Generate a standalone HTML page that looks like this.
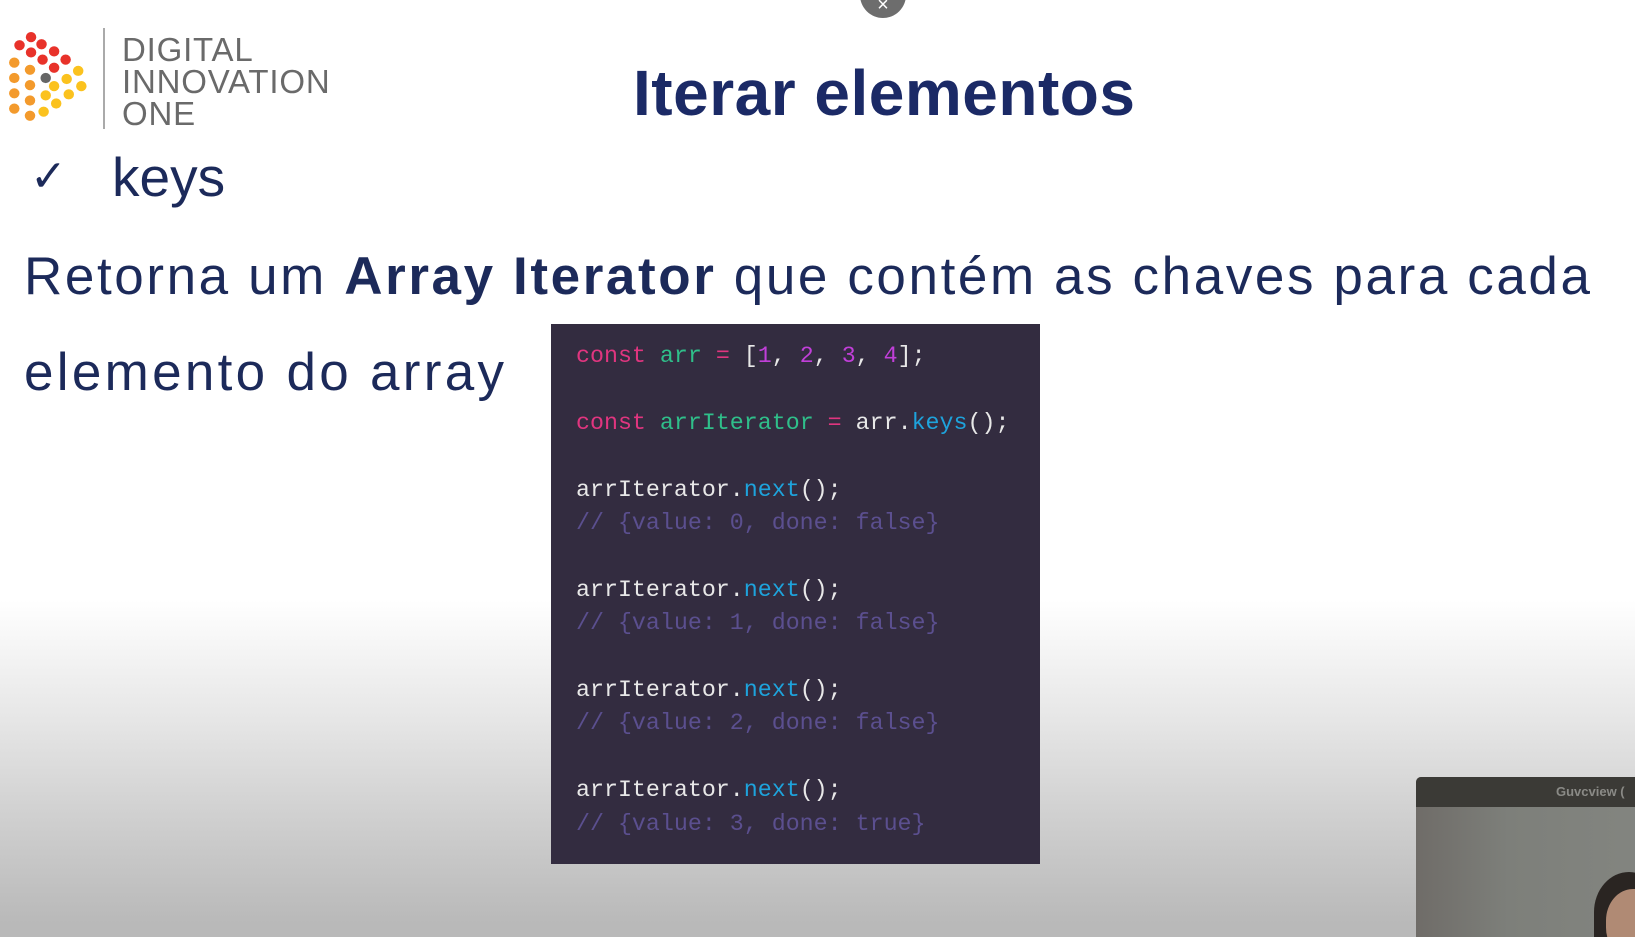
<!DOCTYPE html>
<html style="height:923px;background:#b9b9b9"><head><meta charset="utf-8"><style>
html,body{margin:0;padding:0}
body{width:1635px;height:923px;overflow:hidden;position:relative;font-family:"Liberation Sans",sans-serif;color:#1c2a5a}
.bg{position:absolute;left:0;top:0;width:1635px;height:923px;
background:linear-gradient(to bottom,#ffffff 0px,#ffffff 600px,#e6e6e6 720px,#cfcfcf 820px,#b9b9b9 923px)}
.a{position:absolute;line-height:1;white-space:nowrap}
.logo{position:absolute;left:122px;color:#6a6a6a;font-size:33px;line-height:1;letter-spacing:0.8px}
pre{position:absolute;left:551px;top:324px;width:489px;height:540px;margin:0;background:#332c40;
font-family:"Liberation Mono",monospace;font-size:23.3px;line-height:33.4px;color:#e8e8e8;padding:16px 0 0 25px;box-sizing:border-box}
.k{color:#e0357f}.v{color:#2fbf8a}.n{color:#c13fd9}.f{color:#1ea3dc}.c{color:#5b4f8f}
</style></head><body>
<div class="bg"></div>
<div style="position:absolute;left:860px;top:-28px;width:46px;height:46px;border-radius:50%;background:#6d6d6d;color:#fff;text-align:center;font-size:20px;line-height:66px">×</div>
<svg style="position:absolute;left:8px;top:32px" width="88" height="94" viewBox="0 0 84 92" preserveAspectRatio="none">
<g fill="#e8322a"><circle cx="22" cy="5" r="5"/><circle cx="11" cy="13" r="5"/><circle cx="32" cy="12" r="5"/><circle cx="22" cy="20" r="5"/><circle cx="44" cy="19" r="5"/><circle cx="33" cy="27" r="5"/><circle cx="55" cy="27" r="5"/><circle cx="44" cy="35" r="5"/></g>
<g fill="#f39a2c"><circle cx="6" cy="30" r="5"/><circle cx="6" cy="45" r="5"/><circle cx="6" cy="60" r="5"/><circle cx="6" cy="75" r="5"/><circle cx="21" cy="37" r="5"/><circle cx="21" cy="52" r="5"/><circle cx="21" cy="67" r="5"/><circle cx="21" cy="82" r="5"/></g>
<circle cx="36" cy="45" r="5" fill="#666"/>
<g fill="#fbc21e"><circle cx="67" cy="38" r="5"/><circle cx="56" cy="46" r="5"/><circle cx="70" cy="53" r="5"/><circle cx="44" cy="53" r="5"/><circle cx="58" cy="61" r="5"/><circle cx="36" cy="62" r="5"/><circle cx="46" cy="70" r="5"/><circle cx="34" cy="78" r="5"/></g>
</svg>
<div style="position:absolute;left:103px;top:28px;width:2px;height:101px;background:#aaa"></div>
<div class="logo" style="top:33px">DIGITAL</div>
<div class="logo" style="top:65px">INNOVATION</div>
<div class="logo" style="top:97px">ONE</div>
<div class="a" style="left:633px;top:61px;font-size:64px;font-weight:bold;color:#1b2a66;letter-spacing:0.5px">Iterar elementos</div>
<div class="a" style="left:30px;top:155px;font-size:44px">✓</div>
<div class="a" style="left:112px;top:150px;font-size:55px">keys</div>
<div class="a" style="left:24px;top:250px;font-size:53px;letter-spacing:2.6px">Retorna um <b>Array Iterator</b> que contém as chaves para cada</div>
<div class="a" style="left:24px;top:346px;font-size:53px;letter-spacing:3.3px">elemento do array</div>
<pre><span class="k">const</span> <span class="v">arr</span> <span class="k">=</span> [<span class="n">1</span>, <span class="n">2</span>, <span class="n">3</span>, <span class="n">4</span>];

<span class="k">const</span> <span class="v">arrIterator</span> <span class="k">=</span> arr.<span class="f">keys</span>();

arrIterator.<span class="f">next</span>();
<span class="c">// {value: 0, done: false}</span>

arrIterator.<span class="f">next</span>();
<span class="c">// {value: 1, done: false}</span>

arrIterator.<span class="f">next</span>();
<span class="c">// {value: 2, done: false}</span>

arrIterator.<span class="f">next</span>();
<span class="c">// {value: 3, done: true}</span></pre>
<div style="position:absolute;left:1416px;top:777px;width:230px;height:160px;border-radius:5px 0 0 0;background:linear-gradient(to right,#6f6c68,#7d7f7a 40%,#838580);overflow:hidden">
<div style="height:30px;background:#3b3a36;color:#8a8a86;font-size:13px;font-weight:bold;line-height:30px;padding-left:140px">Guvcview (</div>
<div style="position:absolute;left:178px;top:95px;width:70px;height:80px;border-radius:50% 50% 0 0;background:#2a2522"></div>
<div style="position:absolute;left:190px;top:112px;width:60px;height:70px;border-radius:45%;background:#b08a74"></div>
</div>
</body></html>
